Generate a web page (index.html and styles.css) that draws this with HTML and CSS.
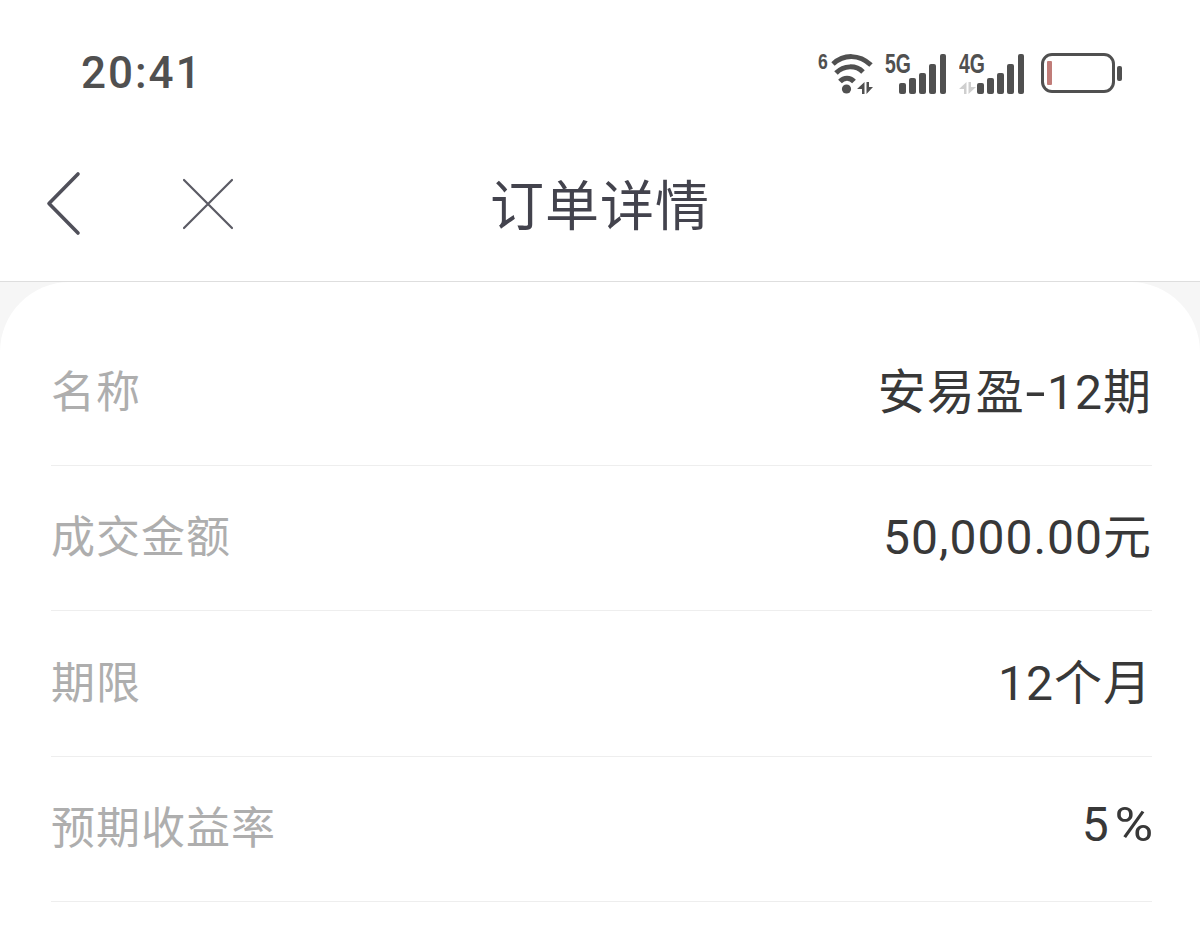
FILE: index.html
```html
<!DOCTYPE html>
<html lang="zh-CN">
<head>
    <meta charset="UTF-8">
    <meta name="viewport" content="width=device-width, initial-scale=1.0">
    <title>订单详情</title>
    <link rel="stylesheet" href="styles.css">
</head>
<body>
    <div class="status-bar">
        <span class="time">20:41</span>
        <div class="status-icons">
            <div class="wifi">
                <span class="net-label wifi-six">6</span>
                <svg width="55" height="41" viewBox="0 0 55 41" fill="none" stroke="#505050" stroke-width="5">
                    <path d="M15 11 C26 1 41 1 53 12"/>
                    <path d="M18 20 C26 12 38 12 45 19"/>
                    <path d="M22 28.5 C26 24 32 24 36 28.5"/>
                    <circle cx="28.5" cy="36" r="4.6" fill="#505050" stroke="none"/>
                    <path d="M46.5 29 V41 H44 V36 H39 Z M48.5 41 V29 H51 V34 H55 Z" fill="#505050" stroke="none"/>
                </svg>
            </div>
            <div class="signal">
                <span class="net-label sim-label">5G</span>
                <div class="bars">
                    <i class="bar bar-1"></i><i class="bar bar-2"></i><i class="bar bar-3"></i><i class="bar bar-4"></i><i class="bar bar-5"></i>
                </div>
            </div>
            <div class="signal signal-second">
                <span class="net-label sim-label">4G</span>
                <svg class="arrows" width="17" height="12" viewBox="0 0 17 12" fill="#cfcfcf">
                    <path d="M7.5 0 V12 H5 V7 H0 Z M9.5 12 V0 H12 V5 H17 Z"/>
                </svg>
                <div class="bars">
                    <i class="bar bar-1"></i><i class="bar bar-2"></i><i class="bar bar-3"></i><i class="bar bar-4"></i><i class="bar bar-5"></i>
                </div>
            </div>
            <div class="battery">
                <div class="battery-body"><i class="battery-level"></i></div>
                <i class="battery-cap"></i>
            </div>
        </div>
    </div>

    <div class="nav-bar">
        <div class="nav-icons">
            <svg class="icon-back" width="36" height="66" viewBox="0 0 36 66" fill="none" stroke="#50505a" stroke-width="3.6" stroke-linecap="round" stroke-linejoin="round">
                <path d="M32 3 L3 32.5 L32 62"/>
            </svg>
            <svg class="icon-close" width="52" height="52" viewBox="0 0 52 52" fill="none" stroke="#5a5a64" stroke-width="2.2" stroke-linecap="round">
                <path d="M2 2 L50 50 M50 2 L2 50"/>
            </svg>
        </div>
        <h1 class="nav-title">订单详情</h1>
    </div>

    <div class="page">
        <div class="card">
            <div class="row"><span class="label">名称</span><span class="value">安易盈<span class="dash">-</span>12期</span></div>
            <div class="row"><span class="label">成交金额</span><span class="value">50,000.00元</span></div>
            <div class="row"><span class="label">期限</span><span class="value">12个月</span></div>
            <div class="row"><span class="label">预期收益率</span><span class="value">5<span class="pct">%</span></span></div>
        </div>
    </div>
</body>
</html>
```

FILE: styles.css
```css
* {
    box-sizing: border-box;
}

html, body {
    height: 100%;
}

body {
    margin: 0;
    overflow: hidden;
    background-color: #fff;
    font-family: Roboto, "Noto Sans CJK SC", sans-serif;
}

.status-bar {
    height: 131px;
    padding: 15px 78px 0 81px;
    display: flex;
    justify-content: space-between;
    align-items: center;
}

.time {
    font-size: 44px;
    font-weight: 500;
    letter-spacing: 2px;
    color: #505050;
}

.status-icons {
    display: flex;
    align-items: flex-end;
    height: 41px;
}

.net-label {
    position: absolute;
    font-family: "Liberation Sans", sans-serif;
    font-weight: 700;
    color: #505050;
    transform-origin: left top;
}

.wifi {
    position: relative;
    width: 55px;
    height: 41px;
}

.wifi svg {
    display: block;
}

.wifi-six {
    left: 0;
    top: -2px;
    font-size: 22px;
    line-height: 22px;
    transform: scaleX(0.8);
}

.signal {
    position: relative;
    width: 61px;
    height: 41px;
    margin-left: 12px;
    display: flex;
    justify-content: flex-end;
    align-items: flex-end;
}

.signal-second {
    width: 65px;
    margin-left: 13px;
}

.sim-label {
    left: 0;
    top: -2px;
    font-size: 27px;
    line-height: 26px;
    transform: scaleX(0.72);
}

.arrows {
    position: absolute;
    left: 0;
    bottom: 0;
}

.bars {
    display: flex;
    align-items: flex-end;
    gap: 3.6px;
}

.bar {
    display: block;
    width: 6.5px;
    background-color: #505050;
    border-radius: 2px;
}

.bar-1 { height: 11px; }
.bar-2 { height: 16px; }
.bar-3 { height: 21px; }
.bar-4 { height: 30px; }
.bar-5 { height: 40px; }

.battery {
    display: flex;
    align-items: center;
    height: 41px;
    margin-left: 17px;
}

.battery-body {
    width: 74px;
    height: 40px;
    border: 3px solid #505050;
    border-radius: 11px;
    padding: 5px 3px;
}

.battery-level {
    display: block;
    width: 5px;
    height: 100%;
    background-color: #c07c78;
    border-radius: 1px;
}

.battery-cap {
    display: block;
    width: 5px;
    height: 15px;
    margin-left: 2px;
    background-color: #505050;
    border-radius: 2px;
}

.nav-bar {
    position: relative;
    height: 151px;
    border-bottom: 1px solid #dedede;
    display: flex;
    align-items: center;
    justify-content: center;
}

.nav-icons {
    position: absolute;
    left: 46px;
    top: 40px;
    display: flex;
    align-items: center;
    gap: 100px;
}

.nav-title {
    margin: 0;
    padding-bottom: 7px;
    font-size: 54px;
    font-weight: 400;
    letter-spacing: 1px;
    color: #43434d;
}

.page {
    background-color: #f6f6f6;
    height: 649px;
}

.card {
    height: 100%;
    padding: 38px 48px 0 51px;
    background-color: #fff;
    border-radius: 70px 70px 0 0;
}

.row {
    height: 145.5px;
    padding-bottom: 7px;
    border-bottom: 1px solid #eeeeee;
    display: flex;
    justify-content: space-between;
    align-items: center;
    font-size: 44px;
}

.label {
    color: #aeaeae;
    letter-spacing: 1px;
}

.value {
    color: #383838;
    font-size: 48px;
    letter-spacing: 1px;
    margin-top: -2px;
}

.dash {
    display: inline-block;
    margin: 0 4px;
    transform: scaleX(1.5);
}

.pct {
    display: inline-block;
    margin-left: 8px;
    margin-right: -2px;
    transform: scaleX(1.1);
    transform-origin: right center;
}
```
